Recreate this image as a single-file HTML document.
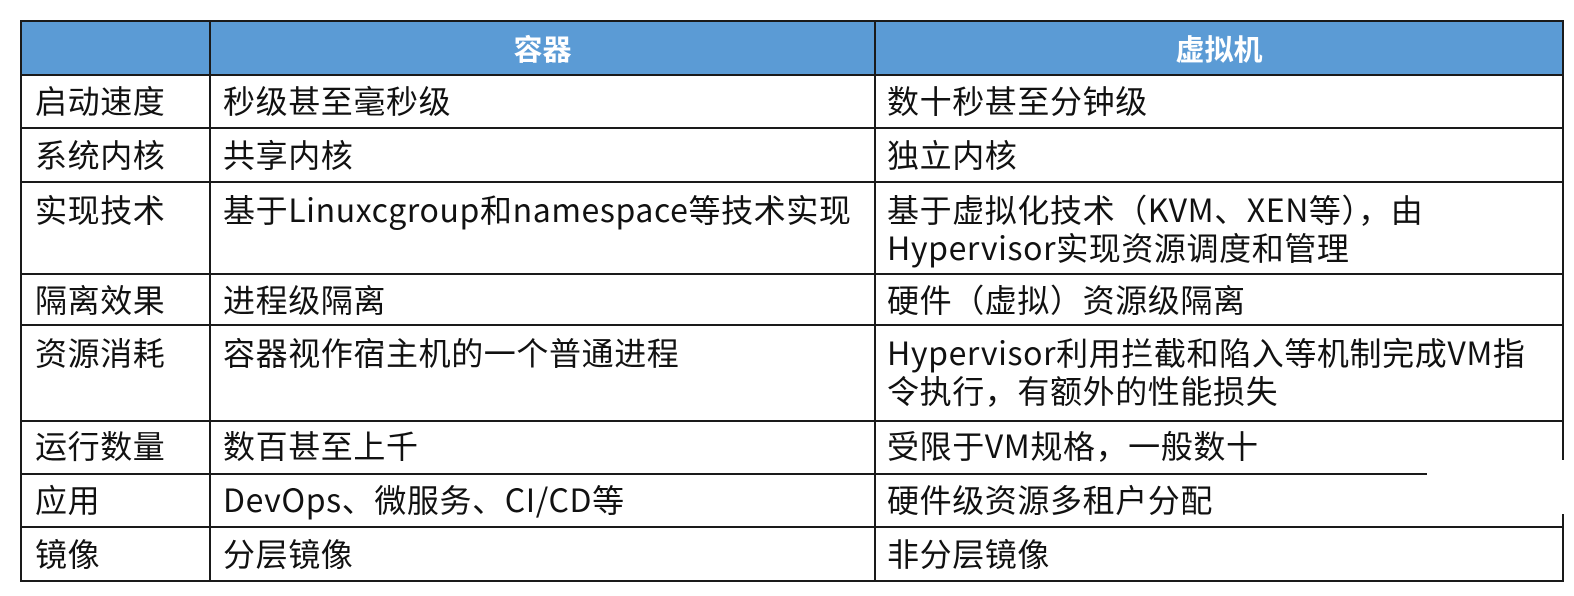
<!DOCTYPE html><html><head><meta charset="utf-8"><style>
body{margin:0;width:1574px;height:596px;background:#fff;position:relative;overflow:hidden;font-family:"Noto Sans CJK SC","Liberation Sans",sans-serif;}
.h{position:absolute;left:21px;top:21px;width:1542px;height:54px;background:#5b9bd5}
.l{position:absolute;background:#1a1a1a}
.t{position:absolute;font-size:32px;letter-spacing:0.6px;line-height:38px;color:#111;white-space:nowrap}
.hd{position:absolute;top:21px;height:54px;line-height:54px;color:#fff;font-weight:bold;font-size:29px;text-align:center}
</style></head><body>
<div class="h"></div>
<div class="hd" style="left:210px;width:665px">容器</div>
<div class="hd" style="left:875px;width:688px">虚拟机</div>
<div class="l" style="left:21px;top:20px;width:1543px;height:2px"></div>
<div class="l" style="left:21px;top:74px;width:1543px;height:2px"></div>
<div class="l" style="left:21px;top:127px;width:1543px;height:2px"></div>
<div class="l" style="left:21px;top:181px;width:1543px;height:2px"></div>
<div class="l" style="left:21px;top:273px;width:1543px;height:2px"></div>
<div class="l" style="left:21px;top:324px;width:1543px;height:2px"></div>
<div class="l" style="left:21px;top:420px;width:1543px;height:2px"></div>
<div class="l" style="left:21px;top:473px;width:1406px;height:2px"></div>
<div class="l" style="left:21px;top:526px;width:1543px;height:2px"></div>
<div class="l" style="left:21px;top:580px;width:1543px;height:2px"></div>
<div class="l" style="left:20px;top:20px;width:2px;height:562px"></div>
<div class="l" style="left:209px;top:20px;width:2px;height:562px"></div>
<div class="l" style="left:874px;top:20px;width:2px;height:562px"></div>
<div class="l" style="left:1562px;top:20px;width:2px;height:440px"></div>
<div class="l" style="left:1562px;top:514px;width:2px;height:68px"></div>
<div class="t" style="left:35px;top:81px">启动速度</div>
<div class="t" style="left:35px;top:135px">系统内核</div>
<div class="t" style="left:35px;top:190px">实现技术</div>
<div class="t" style="left:35px;top:280px">隔离效果</div>
<div class="t" style="left:35px;top:333px">资源消耗</div>
<div class="t" style="left:35px;top:426px">运行数量</div>
<div class="t" style="left:35px;top:480px">应用</div>
<div class="t" style="left:35px;top:534px">镜像</div>
<div class="t" style="left:223px;top:81px">秒级甚至毫秒级</div>
<div class="t" style="left:223px;top:135px">共享内核</div>
<div class="t" style="left:223px;top:190px">基于Linuxcgroup和namespace等技术实现</div>
<div class="t" style="left:223px;top:280px">进程级隔离</div>
<div class="t" style="left:223px;top:333px">容器视作宿主机的一个普通进程</div>
<div class="t" style="left:223px;top:426px">数百甚至上千</div>
<div class="t" style="left:223px;top:480px">DevOps、微服务、CI/CD等</div>
<div class="t" style="left:223px;top:534px">分层镜像</div>
<div class="t" style="left:887px;top:81px">数十秒甚至分钟级</div>
<div class="t" style="left:887px;top:135px">独立内核</div>
<div class="t" style="left:887px;top:190px">基于虚拟化技术（KVM、XEN等），由<br>Hypervisor实现资源调度和管理</div>
<div class="t" style="left:887px;top:280px">硬件（虚拟）资源级隔离</div>
<div class="t" style="left:887px;top:333px">Hypervisor利用拦截和陷入等机制完成VM指<br>令执行，有额外的性能损失</div>
<div class="t" style="left:887px;top:426px">受限于VM规格，一般数十</div>
<div class="t" style="left:887px;top:480px">硬件级资源多租户分配</div>
<div class="t" style="left:887px;top:534px">非分层镜像</div>
</body></html>
